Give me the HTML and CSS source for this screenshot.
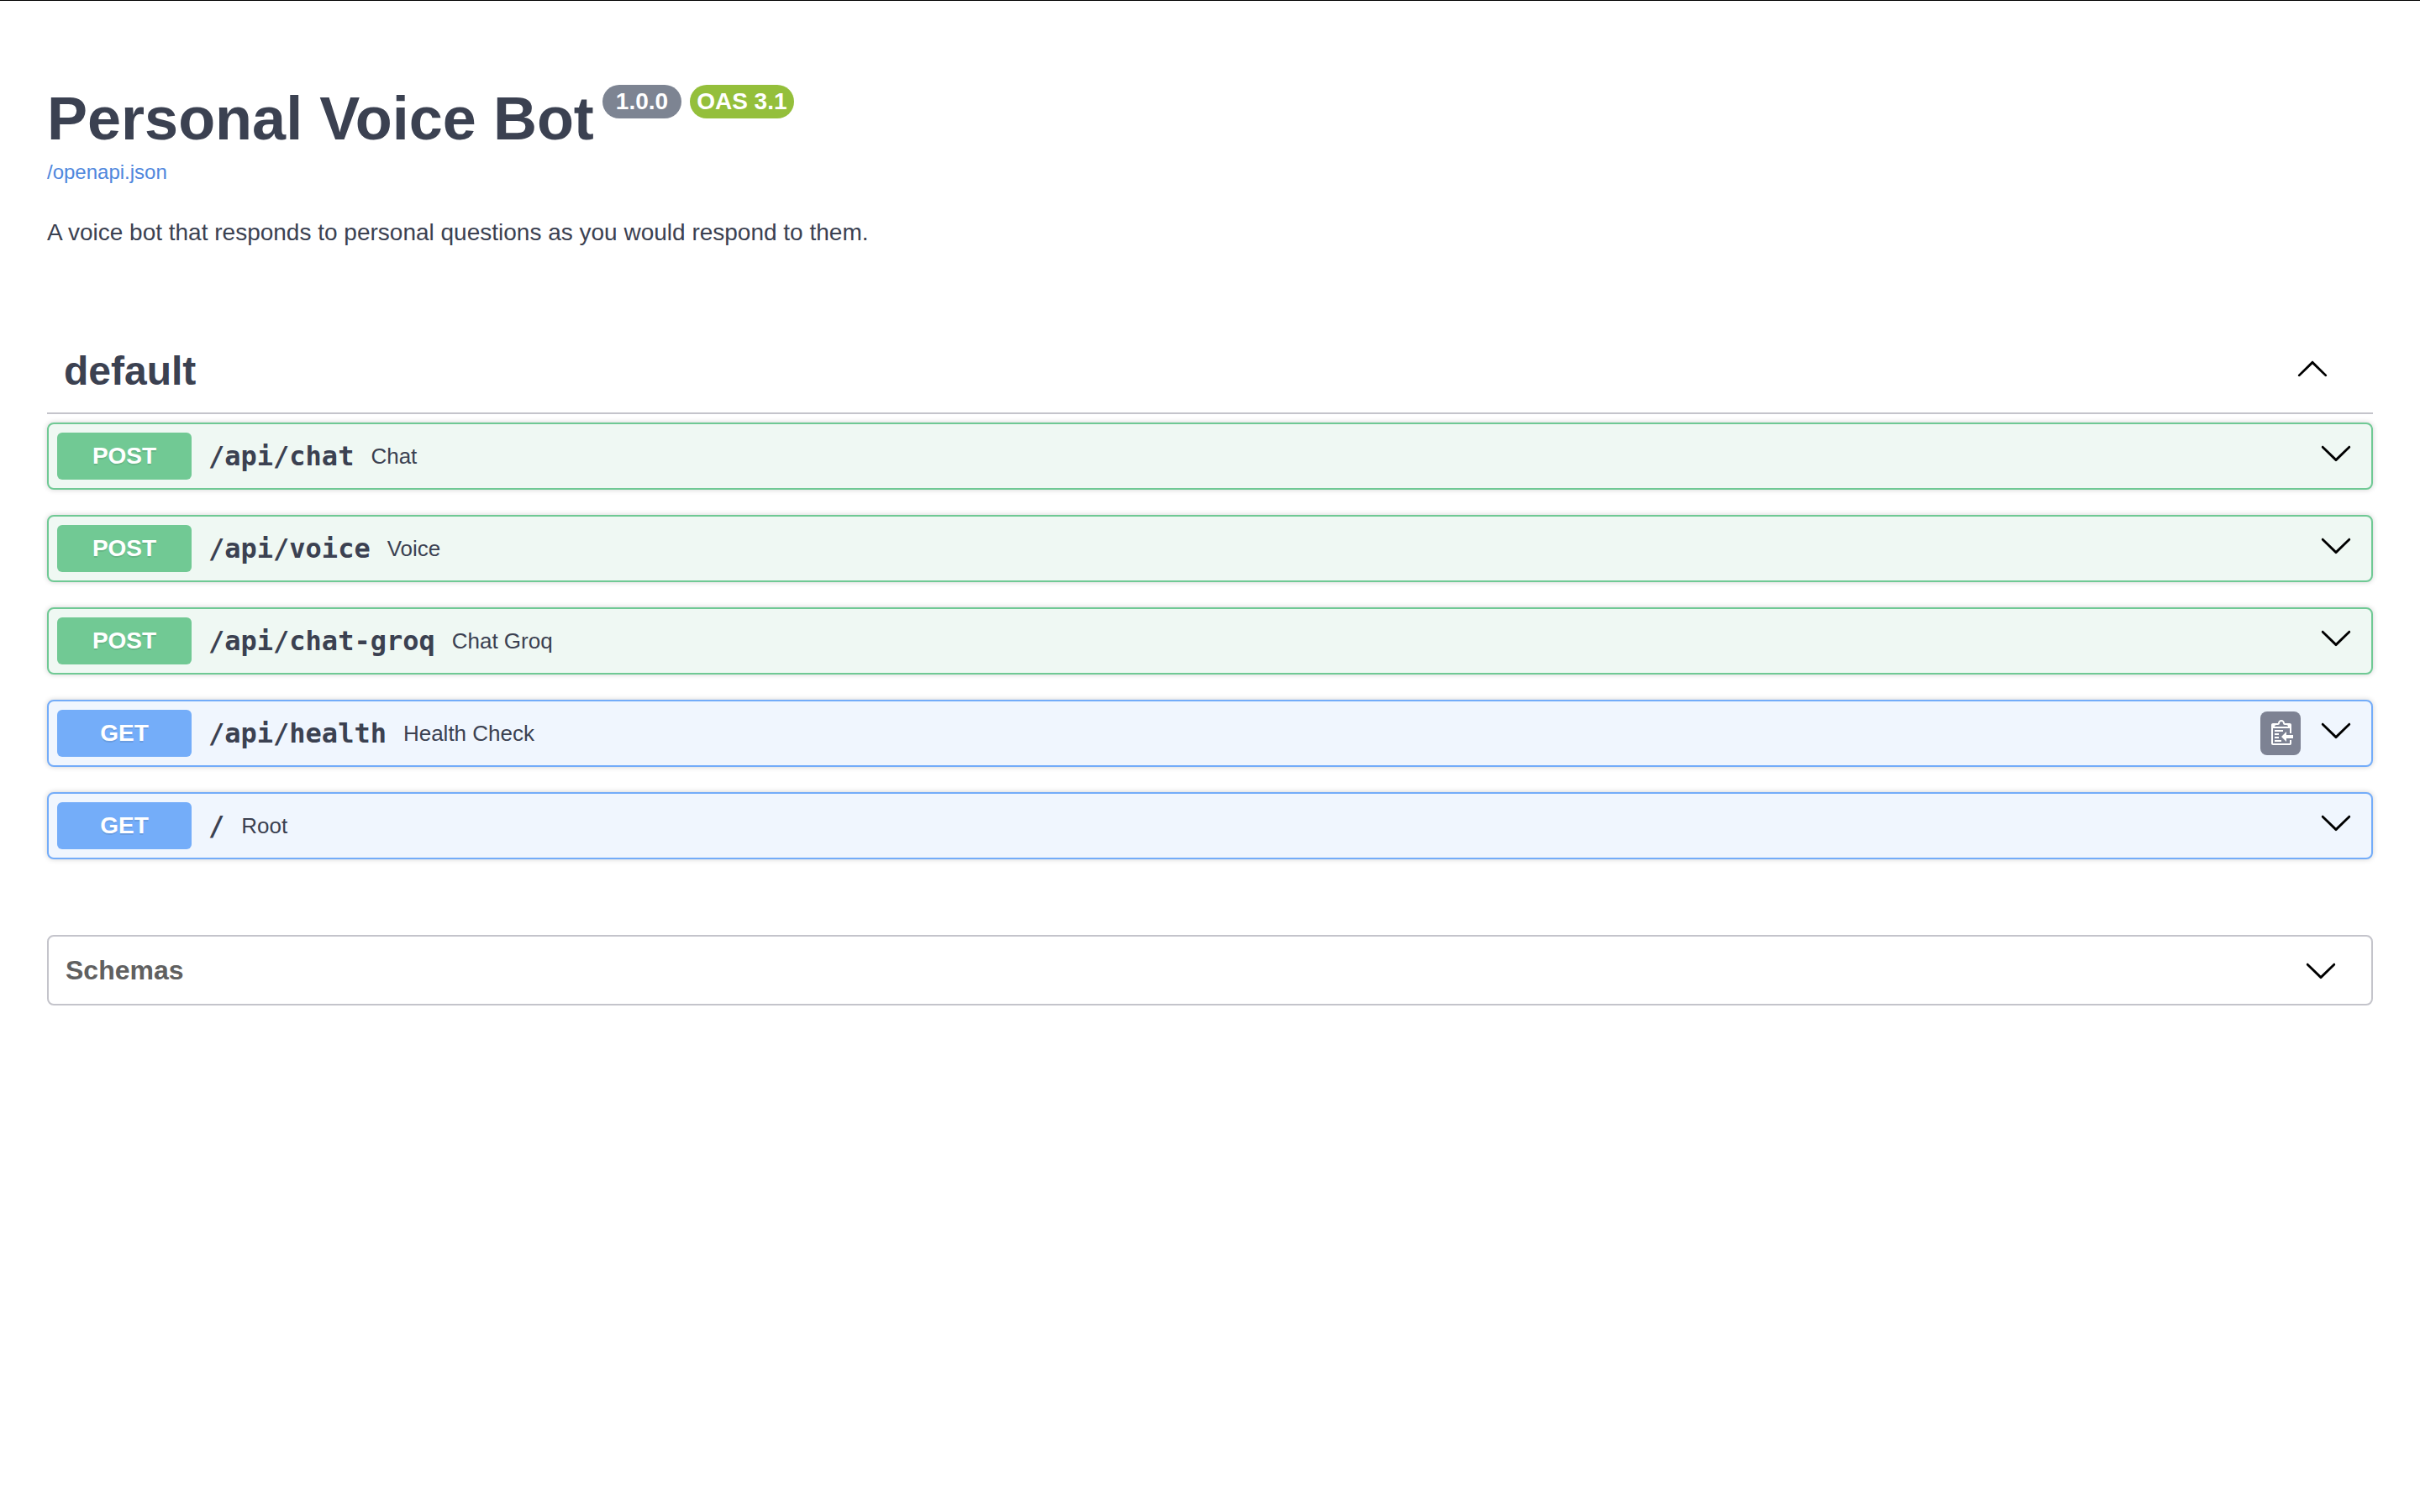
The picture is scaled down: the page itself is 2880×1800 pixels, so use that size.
FILE: index.html
```html
<!DOCTYPE html>
<html lang="en">
<head>
  <meta charset="utf-8">
  <meta name="viewport" content="width=device-width, initial-scale=1">
  <title>Personal Voice Bot</title>
  <link rel="stylesheet" href="styles.css">
</head>
<body>
  <svg class="sprite" aria-hidden="true">
    <symbol id="arrow-up" viewBox="0 0 20 20">
      <path d="M17.418 14.908c.272.268.709.268.979 0s.271-.701 0-.969l-7.908-7.83c-.27-.268-.707-.268-.979 0l-7.908 7.83c-.27.268-.27.701 0 .969.271.268.709.268.979 0L10 7.767l7.418 7.141z"/>
    </symbol>
    <symbol id="arrow-down" viewBox="0 0 20 20">
      <path d="M17.418 6.109c.272-.268.709-.268.979 0s.271.701 0 .969l-7.908 7.83c-.27.268-.707.268-.979 0l-7.908-7.83c-.27-.268-.27-.701 0-.969.271-.268.709-.268.979 0L10 13.25l7.418-7.141z"/>
    </symbol>
  </svg>

  <main class="page">
    <header class="info">
      <div class="title-row">
        <h1 class="title">Personal Voice Bot</h1>
        <span class="pill pill-version">1.0.0</span>
        <span class="pill pill-oas">OAS 3.1</span>
      </div>
      <a class="spec-link" href="/openapi.json">/openapi.json</a>
      <p class="description">A voice bot that responds to personal questions as you would respond to them.</p>
    </header>

    <section class="tag">
      <div class="tag-header">
        <h2 class="tag-name">default</h2>
        <button class="toggle" type="button" aria-label="Collapse section" aria-expanded="true">
          <svg class="arrow"><use href="#arrow-up"/></svg>
        </button>
      </div>

      <div class="operations">
        <div class="operation post">
          <button class="summary" type="button">
            <span class="method">POST</span>
            <span class="path">/api/chat</span>
            <span class="label">Chat</span>
          </button>
          <button class="toggle" type="button" aria-label="Expand Chat"><svg class="arrow"><use href="#arrow-down"/></svg></button>
        </div>
        <div class="operation post">
          <button class="summary" type="button">
            <span class="method">POST</span>
            <span class="path">/api/voice</span>
            <span class="label">Voice</span>
          </button>
          <button class="toggle" type="button" aria-label="Expand Voice"><svg class="arrow"><use href="#arrow-down"/></svg></button>
        </div>
        <div class="operation post">
          <button class="summary" type="button">
            <span class="method">POST</span>
            <span class="path">/api/chat-groq</span>
            <span class="label">Chat Groq</span>
          </button>
          <button class="toggle" type="button" aria-label="Expand Chat Groq"><svg class="arrow"><use href="#arrow-down"/></svg></button>
        </div>
        <div class="operation get">
          <button class="summary" type="button">
            <span class="method">GET</span>
            <span class="path">/api/health</span>
            <span class="label">Health Check</span>
          </button>
          <button class="copy" type="button" aria-label="Copy to clipboard">
            <svg class="copy-icon" viewBox="0 0 15 16">
              <path fill="#fff" transform="translate(2 -1)" fill-rule="evenodd" d="M2 13h4v1H2v-1zm5-6H2v1h5V7zm2 3V8l-3 3 3 3v-2h5v-2H9zM4.5 9H2v1h2.5V9zM2 12h2.5v-1H2v1zm9 1h1v2c-.02.28-.11.52-.3.7-.19.18-.42.28-.7.3H1c-.55 0-1-.45-1-1V4c0-.55.45-1 1-1h3c0-1.11.89-2 2-2 1.11 0 2 .89 2 2h3c.55 0 1 .45 1 1v5h-1V6H1v9h10v-2zM2 5h8c0-.55-.45-1-1-1H8c-.55 0-1-.45-1-1s-.45-1-1-1-1 .45-1 1-.45 1-1 1H3c-.55 0-1 .45-1 1z"/>
            </svg>
          </button>
          <button class="toggle" type="button" aria-label="Expand Health Check"><svg class="arrow"><use href="#arrow-down"/></svg></button>
        </div>
        <div class="operation get">
          <button class="summary" type="button">
            <span class="method">GET</span>
            <span class="path">/</span>
            <span class="label">Root</span>
          </button>
          <button class="toggle" type="button" aria-label="Expand Root"><svg class="arrow"><use href="#arrow-down"/></svg></button>
        </div>
      </div>
    </section>

    <section class="schemas">
      <h2 class="schemas-heading">
        <button class="schemas-toggle" type="button" aria-expanded="false">
          <span>Schemas</span>
          <svg class="arrow"><use href="#arrow-down"/></svg>
        </button>
      </h2>
    </section>
  </main>
</body>
</html>
```
FILE: styles.css
```css
* {
  box-sizing: border-box;
}

body {
  margin: 0;
  border-top: 1px solid #000;
  background: #fff;
  color: #3b4151;
  font-family: "Liberation Sans", Arial, sans-serif;
}

button {
  margin: 0;
  padding: 0;
  border: 0;
  background: none;
  color: inherit;
  font: inherit;
  cursor: pointer;
}

h1,
h2,
p {
  margin: 0;
}

.sprite {
  display: none;
}

.page {
  padding: 100px 56px;
}

/* Title, version and description */
.info {
  display: flex;
  flex-direction: column;
  align-items: flex-start;
}

.title-row {
  display: flex;
  align-items: flex-start;
  gap: 10px;
}

.title {
  font-size: 72px;
  line-height: 80px;
}

.pill {
  border-radius: 20px;
  color: #fff;
  font-size: 28px;
  font-weight: 700;
  line-height: 40px;
  white-space: nowrap;
}

.pill-version {
  padding: 0 16px;
  background: #7d8492;
}

.pill-oas {
  padding: 0 8px;
  background: #94bf3b;
}

.spec-link {
  margin-top: 10px;
  color: #4f87dd;
  font-size: 24px;
  line-height: 28px;
  text-decoration: none;
}

.description {
  margin-top: 41px;
  font-size: 28px;
  line-height: 34px;
}

/* Tag section */
.tag {
  margin-top: 100px;
}

.tag-header {
  display: flex;
  align-items: center;
  justify-content: space-between;
  padding: 20px 52px 21px 20px;
  border-bottom: 2px solid #c4c4cb;
}

.tag-name {
  font-size: 48px;
  line-height: 56px;
}

.toggle {
  display: flex;
  padding-bottom: 8px;
}

.arrow {
  display: block;
  width: 40px;
  height: 40px;
  fill: #000;
}

.operations {
  display: flex;
  flex-direction: column;
  gap: 30px;
  padding-top: 10px;
}

.operation {
  display: flex;
  align-items: center;
  padding: 10px 22px 10px 10px;
  border: 2px solid;
  border-radius: 8px;
  box-shadow: 0 0 6px rgba(0, 0, 0, 0.19);
}

.post {
  border-color: #6fc994;
  background: #eff8f3;
}

.get {
  border-color: #73acf9;
  background: #f0f6fe;
}

.summary {
  display: flex;
  flex: 1;
  align-items: center;
  gap: 20px;
  text-align: left;
}

.method {
  width: 160px;
  border-radius: 6px;
  color: #fff;
  font-size: 28px;
  font-weight: 700;
  line-height: 56px;
  text-align: center;
  text-shadow: 0 2px 0 rgba(0, 0, 0, 0.1);
}

.post .method {
  background: #71c994;
}

.get .method {
  background: #74adf9;
}

.path {
  font-family: "DejaVu Sans Mono", monospace;
  font-size: 32px;
  font-weight: 700;
}

.label {
  font-size: 26px;
}

.copy {
  display: flex;
  align-items: center;
  justify-content: center;
  width: 48px;
  height: 52px;
  margin-right: 22px;
  border-radius: 8px;
  background: #7d8293;
}

.copy-icon {
  width: 30px;
  height: 32px;
}

/* Schemas */
.schemas {
  margin-top: 90px;
  border: 2px solid #c4c4cb;
  border-radius: 8px;
}

.schemas-heading {
  color: #606060;
  font-size: 32px;
}

.schemas-toggle {
  display: flex;
  align-items: center;
  justify-content: space-between;
  width: 100%;
  padding: 20px 40px 20px 20px;
}
```
